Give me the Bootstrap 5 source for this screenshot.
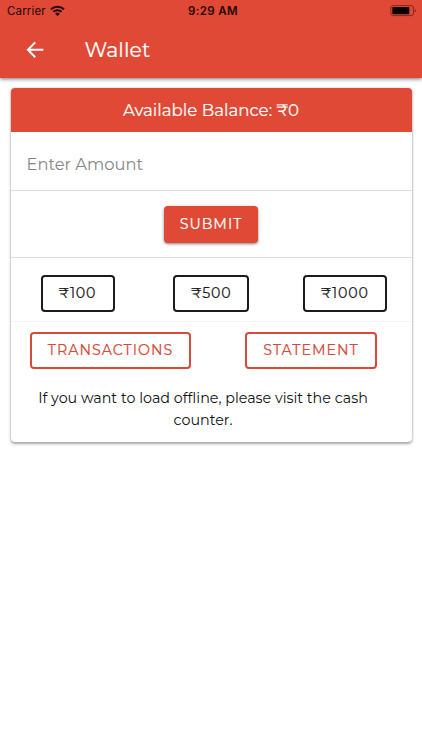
<!DOCTYPE html>
<html lang="en">
<head>
<meta charset="utf-8">
<meta name="viewport" content="width=device-width, initial-scale=1">
<title>Wallet</title>
<link href="https://cdn.jsdelivr.net/npm/bootstrap@5.3.0/dist/css/bootstrap.min.css" rel="stylesheet">
<style>
:root{--brand:#df4935}
body{font-family:Montserrat,Inter,"Noto Sans",sans-serif;background:#fff;color:#111;height:750px;overflow:hidden}
.topbar{background:var(--brand);height:78px;box-shadow:0 1px 4px rgba(0,0,0,.55)}
.status{height:22px;font-family:Inter,sans-serif;font-size:11.5px;line-height:22px;color:#260806;padding:0 5px 0 7px}
.status>*{flex:1 1 0}
.carrier{letter-spacing:.15px}
.clock{font-weight:600;letter-spacing:.35px;padding-left:2px}
.titlebar{height:55px;padding-left:26px}
.page-title{font-size:20.5px;line-height:24px;font-weight:400;margin:0 0 0 40.5px;letter-spacing:.05px;-webkit-text-stroke:.2px #fff}
.wallet{margin:10px 10.5px 0 10.5px;height:354px;border:0;border-radius:4px;box-shadow:0 2px 3px rgba(0,0,0,.32),0 0 2px rgba(0,0,0,.25)}
.balance{height:44px;background:var(--brand);border-radius:4px 4px 0 0;font-size:16.6px;letter-spacing:0;-webkit-text-stroke:.15px #fff}
.amount{height:59px;border:0;border-bottom:1.5px solid #dfdfdf;border-radius:0;padding:6px 16px 0;font-size:16.3px;letter-spacing:0;color:#333}
.amount::placeholder{color:#858585;opacity:1}
.amount:focus{box-shadow:none}
.submit-row{height:67px;border-bottom:1.5px solid #dfdfdf}
.quick-row{height:64px;padding:8px 25px 0 30px;border-bottom:1px solid #f4f4f4}
.links-row{height:56px;padding:0 34.5px 0 19.5px}
.action{height:37px;padding:0;font-size:14.2px;font-weight:400;line-height:1;letter-spacing:1px;border-radius:4px;white-space:nowrap;-webkit-text-stroke:.2px currentColor}
.fill{width:94px;background:var(--brand);color:#fff;border:0;box-shadow:0 1px 3px rgba(0,0,0,.5)}
.dark-line{border:2px solid #1c1c1e;color:#1c1c1e;letter-spacing:.8px}
.red-line{border:2px solid #d64a39;color:#d64a39}
.w-a{width:74px}.w-b{width:76px;margin-left:5px}.w-c{width:83.5px}.w-d{width:161px}.w-e{width:132px}
.note{font-size:14.3px;line-height:22px;margin:0;padding:9px 36px 0 20px}
</style>
<script src="https://cdn.jsdelivr.net/npm/bootstrap@5.3.0/dist/js/bootstrap.bundle.min.js"></script>
</head>
<body>
<header class="topbar">
  <div class="status d-flex align-items-center">
    <div class="d-flex align-items-center">
      <span class="carrier">Carrier</span>
      <svg class="ms-1" width="15" height="12" viewBox="0 0 15 12" fill="none" stroke="#210604"><path d="M1 4.3a9.4 9.4 0 0 1 13 0" stroke-width="2"/><path d="M3.4 6.8a6 6 0 0 1 8.2 0" stroke-width="1.9"/><path d="M5.1 8.7a3.5 3.5 0 0 1 4.8 0L7.5 11.1z" fill="#210604" stroke="none"/></svg>
    </div>
    <div class="clock text-center">9:29 AM</div>
    <div class="d-flex justify-content-end">
      <svg width="28" height="12" viewBox="0 0 28 12"><rect x="1.8" y=".6" width="22.8" height="10" rx="2.4" fill="none" stroke="#84291e"/><rect x="3.3" y="2" width="17" height="7.2" rx=".8" fill="#080000"/><path d="M25.8 4q1.3.5 1.3 1.7t-1.3 1.7z" fill="#84291e"/></svg>
    </div>
  </div>
  <div class="titlebar d-flex align-items-center text-white">
    <svg width="18" height="18" viewBox="0 0 18 18" fill="none" stroke="#fff" stroke-width="2"><path d="M17.3 8.8H2M9.2 1.4 1.9 8.8l7.3 7.4"/></svg>
    <h1 class="page-title">Wallet</h1>
  </div>
</header>
<main class="card wallet">
  <div class="balance text-white d-flex align-items-center justify-content-center"><span>Available Balance: ₹0</span></div>
  <input class="form-control amount" type="text" placeholder="Enter Amount" aria-label="Enter Amount">
  <div class="submit-row d-flex align-items-center justify-content-center"><button class="btn action fill">SUBMIT</button></div>
  <div class="quick-row d-flex align-items-center justify-content-between">
    <button class="btn action dark-line w-a">₹100</button>
    <button class="btn action dark-line w-b">₹500</button>
    <button class="btn action dark-line w-c">₹1000</button>
  </div>
  <div class="links-row d-flex align-items-center justify-content-between">
    <button class="btn action red-line w-d">TRANSACTIONS</button>
    <button class="btn action red-line w-e">STATEMENT</button>
  </div>
  <p class="note text-center">If you want to load offline, please visit the cash counter.</p>
</main>
</body>
</html>
